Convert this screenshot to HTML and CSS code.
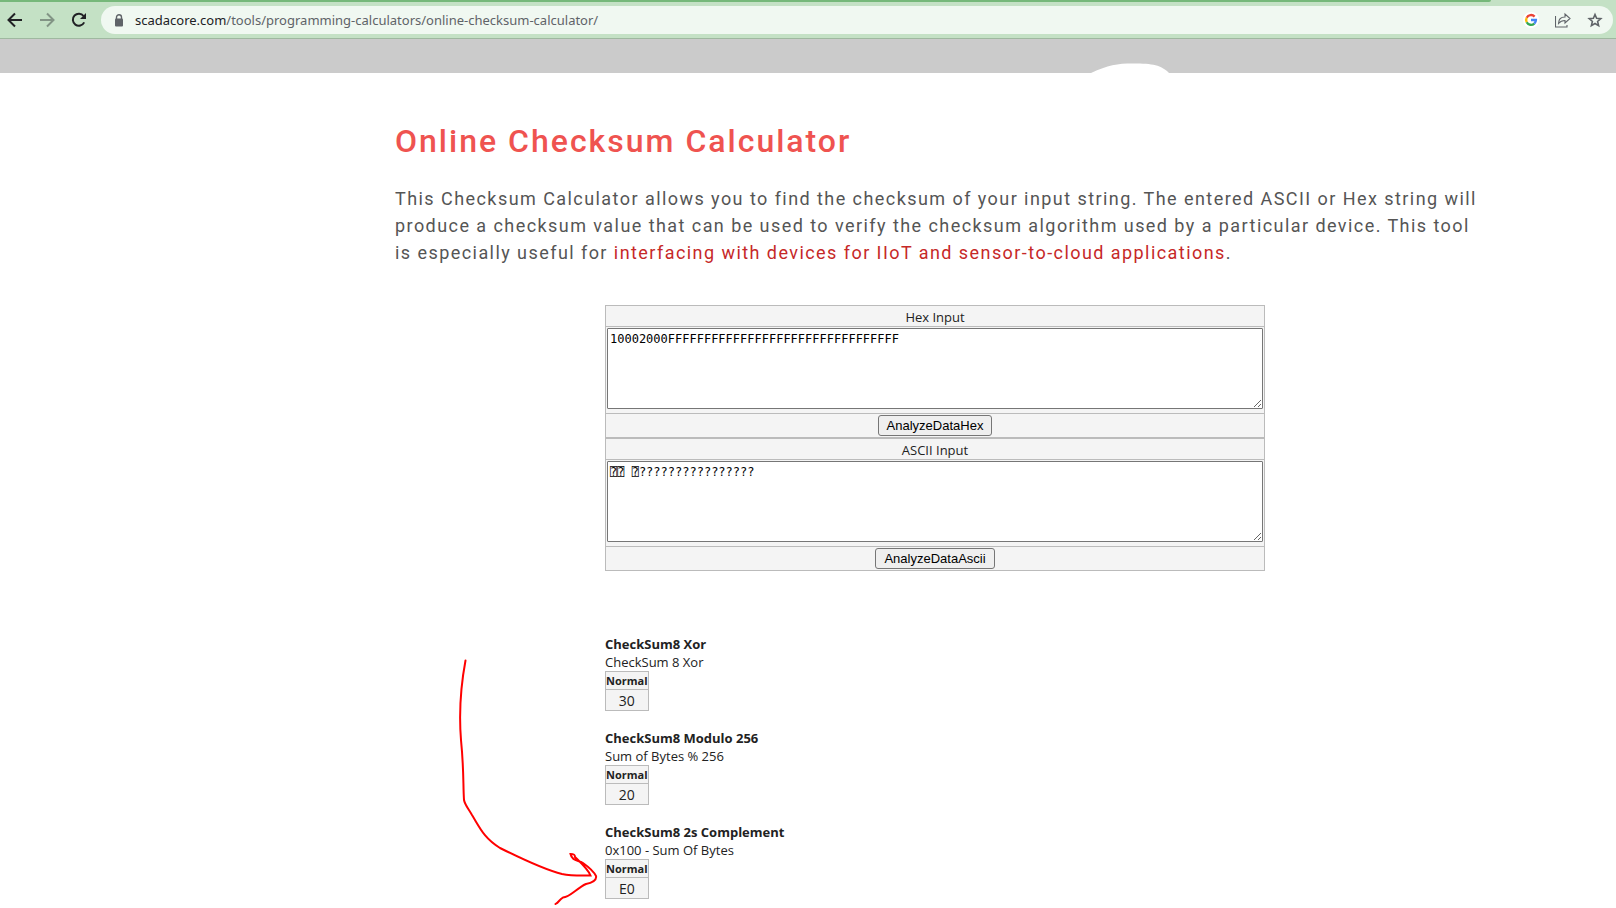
FILE: index.html
```html
<!DOCTYPE html>
<html lang="en">
<head>
<meta charset="utf-8">
<title>Online Checksum Calculator</title>
<link rel="stylesheet" href="styles.css">
</head>
<body>
<header class="browser">
  <div class="tab-strip"></div>
  <nav class="toolbar">
    <button class="nav-button" aria-label="Back"><svg width="16" height="16" viewBox="0 0 16 16"><path d="M15 8H2M8 1.500 1.500 8 8 14.500" fill="none" stroke="#202124" stroke-width="2"/></svg></button>
    <button class="nav-button" aria-label="Forward"><svg width="16" height="16" viewBox="0 0 16 16"><path d="M1 8h13M8 1.500 14.500 8 8 14.500" fill="none" stroke="#829485" stroke-width="2"/></svg></button>
    <button class="nav-button" aria-label="Reload"><svg width="16" height="16" viewBox="0 0 16 16"><path d="M13.200 10.400A6 6 0 1 1 12.600 4" fill="none" stroke="#202124" stroke-width="2"/><path d="M15 1v6H9z" fill="#202124"/></svg></button>
    <div class="address">
      <svg class="lock" width="10" height="13" viewBox="0 0 10 13"><path d="M2.500 5V3.300a2.500 2.500 0 0 1 5 0V5" fill="none" stroke="#5f6368" stroke-width="1.400"/><rect x="1" y="4.500" width="8" height="8" rx="1" fill="#5f6368"/></svg>
      <span class="url"><span class="domain">scadacore.com</span>/tools/programming-calculators/online-checksum-calculator/</span>
      <button class="address-button" aria-label="Search with Google"><svg width="16" height="16" viewBox="0 0 16 16"><circle cx="8" cy="8" r="8" fill="#fff"/><g fill="none" stroke-width="2.400"><path d="M11.600 4.600A4.900 4.900 0 0 0 3.700 5.700" stroke="#ea4335"/><path d="M3.700 5.700a4.900 4.900 0 0 0 0 4.600" stroke="#fbbc05"/><path d="M3.700 10.300a4.900 4.900 0 0 0 7.600 1.300" stroke="#34a853"/><path d="M11.300 11.600A4.900 4.900 0 0 0 12.900 8H8" stroke="#4285f4"/></g></svg></button>
      <button class="address-button" aria-label="Share"><svg width="16" height="16" viewBox="0 0 16 16"><path d="M.500 4v11h11.500v-2M3.500 11.500c0-4.500 2.500-6.500 6.500-6.500V2l5 4.500-5 4.500V8.500c-3 0-4.500.500-6.500 3z" fill="none" stroke="#5f6368" stroke-width="1.100"/></svg></button>
      <button class="address-button" aria-label="Bookmark"><svg width="16" height="16" viewBox="0 0 16 16"><path d="m8 2.500 1.600 3.800 4.200.400-3.200 2.800 1 4.100L8 11.500l-3.600 2.100 1-4.100-3.200-2.800 4.200-.400z" fill="none" stroke="#5f6368" stroke-width="1.600"/></svg></button>
    </div>
  </nav>
</header>
<div class="banner"><svg class="banner-shape" width="90" height="11" viewBox="0 0 90 11"><path d="M0 11C17 3 26 1.500 42 1.500c20 0 28 1.500 36 9.500z" fill="#fff"/></svg></div>
<main class="page">
  <h1 class="title">Online Checksum Calculator</h1>
  <p class="intro">This Checksum Calculator allows you to find the checksum of your input string. The entered ASCII or Hex string will produce a checksum value that can be used to verify the checksum algorithm used by a particular device. This tool is especially useful for <a href="#" class="intro-link">interfacing with devices for IIoT and sensor-to-cloud applications</a>.</p>
  <div class="calculator">
    <section class="panel">
      <label class="panel-label" for="hex">Hex Input</label>
      <div class="panel-field"><textarea class="data" id="hex" spellcheck="false">10002000FFFFFFFFFFFFFFFFFFFFFFFFFFFFFFFF</textarea></div>
      <div class="panel-action"><button class="analyze">AnalyzeDataHex</button></div>
    </section>
    <section class="panel">
      <label class="panel-label" for="ascii">ASCII Input</label>
      <div class="panel-field"><textarea class="data" id="ascii" spellcheck="false">&#x2370;&#x2370; &#x2370;????????????????</textarea></div>
      <div class="panel-action"><button class="analyze">AnalyzeDataAscii</button></div>
    </section>
    <div class="results">
      <section class="result">
        <h2 class="result-title">CheckSum8 Xor</h2>
        <p class="result-note">CheckSum 8 Xor</p>
        <table class="result-table"><tr><th>Normal</th></tr><tr><td>30</td></tr></table>
      </section>
      <section class="result">
        <h2 class="result-title">CheckSum8 Modulo 256</h2>
        <p class="result-note">Sum of Bytes % 256</p>
        <table class="result-table"><tr><th>Normal</th></tr><tr><td>20</td></tr></table>
      </section>
      <section class="result">
        <h2 class="result-title">CheckSum8 2s Complement</h2>
        <p class="result-note">0x100 - Sum Of Bytes</p>
        <table class="result-table"><tr><th>Normal</th></tr><tr><td>E0</td></tr></table>
      </section>
      <svg class="arrow" width="160" height="256" viewBox="440 650 160 256"><path d="M465.500 660.500C460 690 459 715 461 740C464 770 463 785 464 800C465 805 468 808 472 815C480 828 484 838 500 848C518 857 545 870 562 874C572 876 580 875.500 590.500 875.500C588 869 580 862 575 857C575 854 573 854 570.500 854C572 861 578 860 583 863C590 868 594 872 596 876C597 880 592 883 586 884C577 888 570 897 563 897.500C559 900 559 902 555.500 904"/></svg>
    </div>
  </div>
</main>
</body>
</html>
```
FILE: styles.css
```css
* { box-sizing: border-box; }
body { margin: 0; background: #fff; font-family: "Open Sans", sans-serif; color: #222; }
button { font-family: inherit; }
.browser { background: #c4e1c5; border-bottom: 1px solid #9fb8a0; }
.tab-strip { width: calc(100% - 125px); height: 2px; background: #76b87a; border-bottom-right-radius: 2px; }
.toolbar { display: flex; align-items: center; height: 36px; padding: 0 3px 0 7px; }
.nav-button { display: flex; width: 16px; margin-right: 16px; padding: 0; border: 0; background: none; }
.address { display: flex; flex: 1; align-items: center; height: 28px; margin-left: -2px; padding: 0 10px 0 13px; border-radius: 14px; background: #f0f8f1; }
.url { flex: 1; margin-left: 11px; font-size: 13px; line-height: 20px; color: #5f6368; font-family: "Noto Sans", sans-serif; }
.domain { color: #202124; }
.address-button { display: flex; margin-left: 16px; padding: 0; border: 0; background: none; }
.banner { display: flex; align-items: flex-end; height: 34px; padding-left: 67.500%; background: #cbcbcb; }
.banner-shape { display: block; }
.page { margin-left: 395px; padding: 48px 132px 9px 0; }
.title { margin: 0; font: 500 32px/40px Roboto, sans-serif; letter-spacing: 2px; color: #ef5350; }
.intro { margin: 24px 0 0; font: 400 18px/27px Roboto, sans-serif; letter-spacing: 0.08em; color: #555; }
.intro-link { color: #c62828; text-decoration: none; }
.calculator { margin: 39px 219px 0 210px; font-size: 13px; }
.panel { display: flex; flex-direction: column; border: 1px solid #bbb; background: #f4f4f4; }
.panel-label { height: 20px; line-height: 22px; text-align: center; }
.panel-field { height: 88px; padding: 1px; border: solid #bbb; border-width: 1px 0; }
.data { display: block; width: 100%; height: 81px; padding: 2px; border: 1px solid #767676; border-radius: 1px; background: #fff; color: #000; font: 12px/16px "DejaVu Sans Mono", monospace; }
.panel-action { display: flex; justify-content: center; padding: 1px; }
.analyze { height: 21px; padding: 0 8px; border: 1px solid #767676; border-radius: 3px; background: #efefef; color: #000; font: 13px/19px "Liberation Sans", sans-serif; }
.results { position: relative; display: grid; gap: 18px; margin-top: 64px; }
.result-title { margin: 0; font-size: 13px; line-height: 18px; }
.result-note { margin: 0; font-size: 13px; line-height: 18px; }
.result-table { width: 43px; border-collapse: collapse; background: #f4f4f4; line-height: 17px; text-align: center; }
.result-table th, .result-table td { padding: 0; border: 1px solid #bbb; }
.result-table th { height: 18px; font-size: 11px; }
.result-table td { height: 21px; font-size: 14px; }
.arrow { position: absolute; top: 15px; left: -165px; fill: none; stroke: #f00; stroke-width: 2; stroke-linecap: round; }
```
